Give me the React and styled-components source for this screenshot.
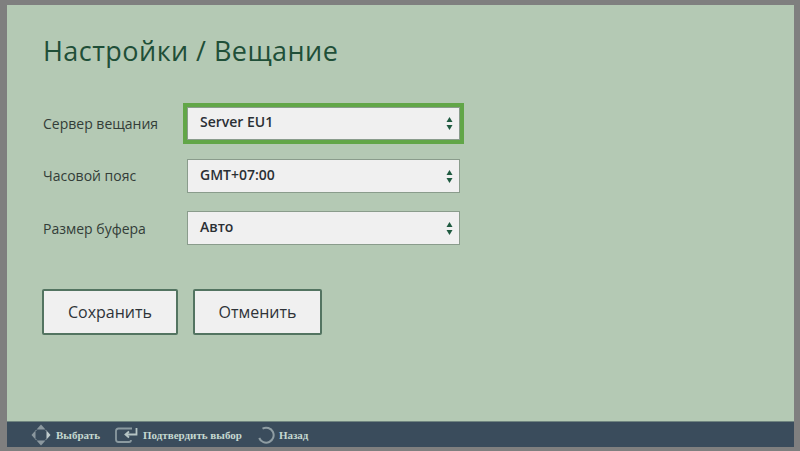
import React from "react";
import styled, { createGlobalStyle } from "styled-components";

const Global = createGlobalStyle`
  html, body { margin: 0; padding: 0; width: 800px; height: 451px; overflow: hidden; background: #7f7f7f; }
  * { box-sizing: border-box; }
`;

const Frame = styled.div`
  width: 800px;
  height: 451px;
  padding: 5px 6px 4px 7px;
  display: flex;
`;

const Screen = styled.div`
  flex: 1;
  display: flex;
  flex-direction: column;
  background: #b4c9b4;
  font-family: "Open Sans", "Noto Sans", sans-serif;
`;

const Content = styled.main`
  flex: 1;
  padding: 26px 0 0 35px;
`;

const Title = styled.h1`
  margin: 0 0 35px 1px;
  font-size: 27px;
  line-height: 40px;
  font-weight: 400;
  color: #1f4f38;
  letter-spacing: 0.45px;
`;

const Form = styled.div`
  display: flex;
  flex-direction: column;
  gap: 18.5px;
`;

const Row = styled.div`
  display: flex;
  align-items: center;
  height: 34px;
`;

const Label = styled.span`
  width: 145px;
  padding-left: 1px;
  font-size: 14px;
  color: #333d38;
`;

const Select = styled.div`
  width: 273px;
  height: ${(p) => (p.$focused ? 33 : 34)}px;
  padding: 0 12px;
  display: flex;
  align-items: center;
  justify-content: space-between;
  background: #f0f0f0;
  border: 1px solid #8a9c8c;
  outline: ${(p) => (p.$focused ? "4px solid #62a648" : "none")};
  font-size: 14px;
  font-weight: 600;
  color: #2a2f34;
`;

const SelectText = styled.span`
  margin-top: -3px;
`;

const Arrows = styled.svg`
  width: 7px;
  height: 20px;
  margin-right: -6px;
  flex: none;
`;

const Actions = styled.div`
  display: flex;
  gap: 15px;
  margin-top: 44px;
`;

const Button = styled.button`
  width: ${(p) => p.$w}px;
  height: 46px;
  padding: 0;
  background: #f0f0f0;
  border: 2px solid #537461;
  border-radius: 2px;
  font-family: inherit;
  font-size: 16px;
  color: #2e3338;
`;

const Footer = styled.footer`
  height: 26px;
  padding-left: 24px;
  display: flex;
  align-items: center;
  background: #3a4c5c;
  border-top: 1px solid #6f8480;
  font-family: "Liberation Serif", serif;
  font-size: 11px;
  font-weight: 700;
  color: #c5d8d0;
`;

const Hint = styled.div`
  display: flex;
  align-items: center;
  gap: ${(p) => p.$gap}px;
  margin-right: ${(p) => p.$mr}px;
`;

const Icon = styled.svg`
  flex: none;
  display: block;
`;

const SelectArrows = () => (
  <Arrows viewBox="0 0 7 20">
    <path d="M3.5 4 L6.5 9 L0.5 9 Z" fill="#1f5a40" />
    <path d="M0.5 12 L6.5 12 L3.5 17 Z" fill="#1f5a40" />
  </Arrows>
);

const Field = ({ label, value, focused }) => (
  <Row>
    <Label>{label}</Label>
    <Select $focused={focused}>
      <SelectText>{value}</SelectText>
      <SelectArrows />
    </Select>
  </Row>
);

export default function App() {
  return (
    <Frame>
      <Global />
      <Screen>
        <Content>
          <Title>Настройки / Вещание</Title>
          <Form>
            <Field label="Сервер вещания" value="Server EU1" focused />
            <Field label="Часовой пояс" value="GMT+07:00" />
            <Field label="Размер буфера" value="Авто" />
          </Form>
          <Actions>
            <Button $w={136}>Сохранить</Button>
            <Button $w={129}>Отменить</Button>
          </Actions>
        </Content>
        <Footer>
          <Hint $mr={15} $gap={5}>
            <Icon width="20" height="22" viewBox="0 0 20 22" fill="#8b989f">
              <path d="M10 0.5 L14.5 5.5 L5.5 5.5 Z" />
              <path d="M10 21.5 L14.5 16.5 L5.5 16.5 Z" />
              <path d="M0.5 11 L4.5 6.5 L4.5 15.5 Z" />
              <path d="M19.5 11 L15.5 6.5 L15.5 15.5 Z" fill="#c0ccce" />
              <path d="M5.5 6.5 L4.5 6.5 M14.5 6.5 L15.5 6.5 M5.5 15.5 L4.5 15.5 M14.5 15.5 L15.5 15.5" stroke="#8b989f" strokeWidth="1" />
            </Icon>
            Выбрать
          </Hint>
          <Hint $mr={15} $gap={5}>
            <Icon width="23" height="16" viewBox="0 0 23 16" fill="none" stroke="#8b9aa0" strokeWidth="1.8">
              <path d="M17 1.5 H3.5 Q1 1.5 1 4 V12.5 Q1 15 3.5 15 H14 Q16 15 16 13" />
              <path d="M21.5 1 V7.5 H11 M14 4.5 L10.5 7.5 L14 10.5" stroke="#b5c4c4" />
            </Icon>
            Подтвердить выбор
          </Hint>
          <Hint $mr={0} $gap={4}>
            <Icon width="18" height="18" viewBox="0 0 18 18" fill="none" stroke="#8f9da3" strokeWidth="2">
              <path d="M5.5 2.6 A7.5 7.5 0 1 1 2.2 12" />
            </Icon>
            Назад
          </Hint>
        </Footer>
      </Screen>
    </Frame>
  );
}
